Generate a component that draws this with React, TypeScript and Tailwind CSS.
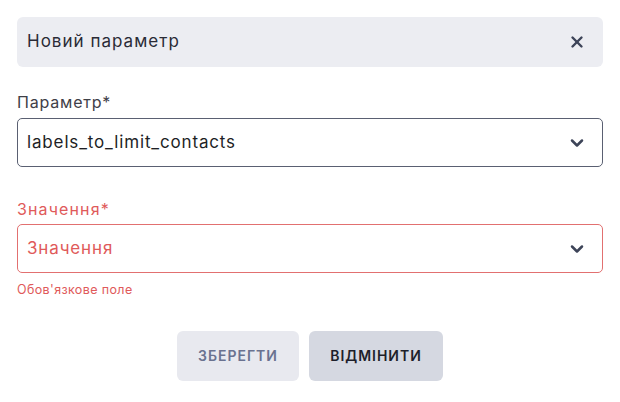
import React from 'react';
import { X, ChevronDown } from 'lucide-react';

const font = { fontFamily: 'Inter, "Noto Sans", sans-serif' };

const App: React.FC = () => {
  return (
    <div className="w-[620px] h-[402px] bg-white px-[17px] pt-[17px]" style={font}>
      <div className="flex items-center justify-between h-[50px] rounded-md bg-[#ecedf2] pl-[10px] pr-[17px]">
        <span className="text-[17px] tracking-[0.06em] text-[#2a2b36]">Новий параметр</span>
        <X size={18} strokeWidth={3.2} className="text-[#3d4458]" />
      </div>

      <div className="mt-[23px]">
        <label className="block text-[16px] leading-[24px] tracking-[0.05em] text-[#3f4048]">Параметр*</label>
        <div className="mt-[4px] flex items-center justify-between h-[49px] rounded-[5px] border border-[#5a6072] pl-[9px] pr-[15px]">
          <span className="text-[17px] tracking-[0.05em] text-[#1e1f26]">labels_to_limit_contacts</span>
          <ChevronDown size={20} strokeWidth={3} className="text-[#3d4458]" />
        </div>
      </div>

      <div className="mt-[30px]">
        <label className="block text-[16px] leading-[24px] tracking-[0.07em] text-[#e05a5a]">Значення*</label>
        <div className="mt-[3px] flex items-center justify-between h-[49px] rounded-[5px] border border-[#e27070] pl-[9px] pr-[15px]">
          <span className="text-[17px] tracking-[0.05em] text-[#e05a5a]">Значення</span>
          <ChevronDown size={20} strokeWidth={3} className="text-[#3d4458]" />
        </div>
        <div className="mt-[8px] text-[12.5px] tracking-[0.03em] text-[#e05a5a]">Обов'язкове поле</div>
      </div>

      <div className="mt-[31px] flex justify-center gap-[10px]">
        <button className="h-[50px] w-[122px] rounded-md bg-[#e8e9ef] text-[14px] font-semibold tracking-[0.07em] text-[#6a7290]">ЗБЕРЕГТИ</button>
        <button className="h-[50px] w-[134px] rounded-md bg-[#d5d8e1] text-[14px] font-semibold tracking-[0.07em] text-[#1e1f2a]">ВІДМІНИТИ</button>
      </div>
    </div>
  );
};

export default App;
